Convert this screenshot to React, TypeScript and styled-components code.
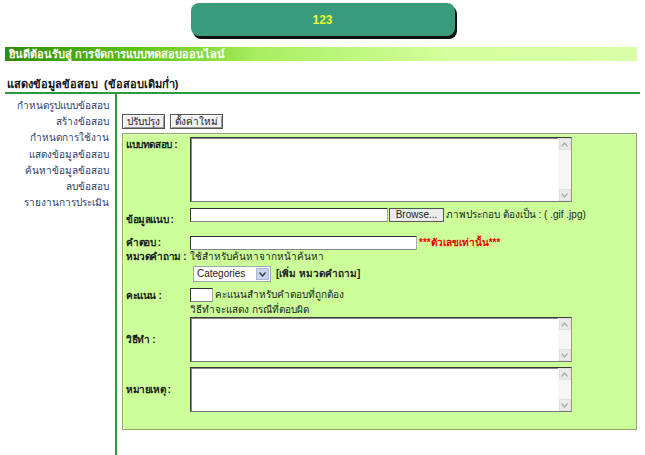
import React from "react";
import styled, { createGlobalStyle } from "styled-components";

const Global = createGlobalStyle`
  html, body { margin: 0; padding: 0; background: #fff; }
  body { font-family: Tahoma, "Liberation Sans", "DejaVu Sans", sans-serif; font-size: 11px; color: #222; }
`;

const Page = styled.div`
  width: 645px;
  height: 455px;
  overflow: hidden;
  position: relative;
`;

const Banner = styled.div`
  margin: 3px auto 0;
  width: 264px;
  height: 33px;
  background: #3a9a7c;
  border-radius: 8px;
  box-shadow: 2px 3px 0 #111;
  display: flex;
  align-items: center;
  justify-content: center;
  color: #e8ff30;
  font-weight: bold;
  font-size: 12px;
  font-family: "Liberation Sans", sans-serif;
`;

const WelcomeBar = styled.div`
  margin: 11px 8px 0 5px;
  height: 14px;
  background: linear-gradient(to right, #2f8a08 0%, #5cc010 20%, #a8ee60 40%, #d4ff9c 70%, #d8ffa8 100%);
  color: #fff;
  font-weight: bold;
  font-size: 11px;
  line-height: 14px;
  padding-left: 4px;
`;

const Title = styled.div`
  margin: 16px 0 0 7px;
  font-weight: bold;
  font-size: 11px;
  height: 14px;
  line-height: 14px;
  color: #111;
`;

const Body = styled.div`
  margin: 1px 5px 0 5px;
  border-top: 2px solid #2e9a3a;
  display: flex;
  height: 362px;
`;

const Side = styled.div`
  width: 104px;
  border-right: 2px solid #2e9a3a;
  padding: 4px 6px 0 0;
  display: flex;
  flex-direction: column;
  align-items: flex-end;
`;

const MenuItem = styled.div`
  height: 16.2px;
  line-height: 16px;
  color: #2a3d6c;
  font-size: 10px;
  white-space: nowrap;
`;

const Main = styled.div`
  flex: 1;
  padding: 20px 0 0 5px;
  display: flex;
  flex-direction: column;
`;

const Toolbar = styled.div`
  display: flex;
  gap: 5px;
  margin-bottom: 4px;
`;

const Btn = styled.button`
  height: 15px;
  padding: 0 4px;
  font-size: 10px;
  font-family: inherit;
  background: #f0f0f0;
  border: 1px solid #555;
  box-shadow: inset 1px 1px 0 #fff, inset -1px -1px 0 #999;
  color: #222;
  line-height: 11px;
`;

const Panel = styled.div`
  width: 515px;
  height: 297px;
  background: #ccff99;
  border: 1px solid #8aa86a;
  box-shadow: inset 1px 1px 0 #e6ffcc;
  padding: 3px 0 0 3px;
  box-sizing: border-box;
  display: flex;
  flex-direction: column;
`;

const Row = styled.div<{ $h?: number; $mt?: number; $align?: string }>`
  display: flex;
  align-items: ${(p) => p.$align ?? "flex-start"};
  height: ${(p) => (p.$h ? `${p.$h}px` : "auto")};
  margin-top: ${(p) => p.$mt ?? 0}px;
  line-height: 12px;
  flex-shrink: 0;
`;

const Label = styled.div<{ $pt?: number }>`
  width: 64px;
  font-weight: bold;
  font-size: 10px;
  padding-top: ${(p) => p.$pt ?? 0}px;
  white-space: nowrap;
  color: #1a1a1a;
  letter-spacing: -0.4px;
`;

const Field = styled.div`
  display: flex;
  align-items: center;
  gap: 2px;
  font-size: 10px;
  white-space: nowrap;
`;

const Area = styled.div<{ $h: number }>`
  width: 380px;
  height: ${(p) => p.$h}px;
  background: #fff;
  border: 1px solid #3a3a3a;
  border-right-color: #999;
  border-bottom-color: #777;
  box-shadow: inset 1px 1px 0 #888;
  position: relative;
  box-sizing: content-box;
`;

const ScrollBar = styled.div`
  position: absolute;
  right: 0;
  top: 0;
  bottom: 0;
  width: 13px;
  background: #f6f6f6;
  display: flex;
  flex-direction: column;
  justify-content: space-between;
  align-items: center;
`;

const Arrow = styled.div`
  width: 12px;
  height: 12px;
  background: #eaeaea;
  border: 1px solid #e0e0e0;
  box-sizing: border-box;
  display: flex;
  align-items: center;
  justify-content: center;
`;

const TextBox = styled.div<{ $w: number }>`
  width: ${(p) => p.$w}px;
  height: 12px;
  background: #fff;
  border: 1px solid #333;
  border-right-color: #aaa;
  border-bottom-color: #888;
`;

const Browse = styled.div`
  height: 12px;
  width: 53px;
  border: 1px solid #555;
  background: #ececec;
  font-family: "Liberation Sans", sans-serif;
  font-size: 10px;
  line-height: 12px;
  text-align: center;
  color: #222;
  margin-left: -1px;
`;

const Red = styled.span`
  color: #ee0000;
  font-weight: bold;
  font-size: 10px;
`;

const Select = styled.div`
  width: 73px;
  height: 14px;
  border: 1px solid #9aa;
  background: #fff;
  display: flex;
  align-items: center;
  justify-content: space-between;
  font-family: "Liberation Sans", sans-serif;
  font-size: 10px;
  padding-left: 3px;
  box-sizing: content-box;
  margin-left: 3px;
`;

const SelArrow = styled.div`
  width: 13px;
  height: 12px;
  margin-right: 1px;
  background: #c8d4ec;
  border: 1px solid #a8b8d8;
  box-sizing: border-box;
  display: flex;
  align-items: center;
  justify-content: center;
`;

const Bold = styled.span`
  font-weight: bold;
  margin-left: 3px;
`;

const Chev = ({ up, color = "#aaa" }: { up?: boolean; color?: string }) => (
  <svg width="7" height="5" viewBox="0 0 7 5">
    <path d={up ? "M0.5 4.5 L3.5 1 L6.5 4.5" : "M0.5 0.5 L3.5 4 L6.5 0.5"} fill="none" stroke={color} strokeWidth="1.3" />
  </svg>
);

const TArea = ({ h }: { h: number }) => (
  <Area $h={h}>
    <ScrollBar>
      <Arrow><Chev up /></Arrow>
      <Arrow><Chev /></Arrow>
    </ScrollBar>
  </Area>
);

const menu = [
  "กำหนดรูปแบบข้อสอบ",
  "สร้างข้อสอบ",
  "กำหนดการใช้งาน",
  "แสดงข้อมูลข้อสอบ",
  "ค้นหาข้อมูลข้อสอบ",
  "ลบข้อสอบ",
  "รายงานการประเมิน",
];

export default function App() {
  return (
    <Page>
      <Global />
      <Banner>123</Banner>
      <WelcomeBar>ยินดีต้อนรับสู่ การจัดการแบบทดสอบออนไลน์</WelcomeBar>
      <Title>แสดงข้อมูลข้อสอบ&nbsp;&nbsp;(ข้อสอบเดิมก่ำ)</Title>
      <Body>
        <Side>
          {menu.map((m) => (
            <MenuItem key={m}>{m}</MenuItem>
          ))}
        </Side>
        <Main>
          <Toolbar>
            <Btn>ปรับปรุง</Btn>
            <Btn>ตั้งค่าใหม่</Btn>
          </Toolbar>
          <Panel>
            <Row $h={65}>
              <Label $pt={2}>แบบทดสอบ :</Label>
              <TArea h={63} />
            </Row>
            <Row $h={14} $mt={6}>
              <Label $pt={6}>ข้อมูลแนบ :</Label>
              <Field>
                <TextBox $w={196} />
                <Browse>Browse...</Browse>
                <span>ภาพประกอบ ต้องเป็น : ( .gif .jpg)</span>
              </Field>
            </Row>
            <Row $h={14} $mt={14} $align="center">
              <Label>คำตอบ :</Label>
              <Field>
                <TextBox $w={225} />
                <Red>***ตัวเลขเท่านั้น***</Red>
              </Field>
            </Row>
            <Row $h={12} $mt={1} $align="center">
              <Label>หมวดคำถาม :</Label>
              <Field>ใช้สำหรับค้นหาจากหน้าค้นหา</Field>
            </Row>
            <Row $h={16} $mt={3} $align="center">
              <Label />
              <Field>
                <Select>
                  Categories
                  <SelArrow><Chev color="#334" /></SelArrow>
                </Select>
                <Bold>[เพิ่ม หมวดคำถาม]</Bold>
              </Field>
            </Row>
            <Row $h={14} $mt={6} $align="center">
              <Label $pt={2}>คะแนน :</Label>
              <Field>
                <TextBox $w={21} />
                <span>คะแนนสำหรับคำตอบที่ถูกต้อง</span>
              </Field>
            </Row>
            <Row $h={12} $mt={2} $align="center">
              <Label />
              <Field>วิธีทำจะแสดง กรณีที่ตอบผิด</Field>
            </Row>
            <Row $h={45} $mt={1} $align="center">
              <Label>วิธีทำ :</Label>
              <TArea h={43} />
            </Row>
            <Row $h={45} $mt={5} $align="center">
              <Label>หมายเหตุ :</Label>
              <TArea h={43} />
            </Row>
          </Panel>
        </Main>
      </Body>
    </Page>
  );
}
